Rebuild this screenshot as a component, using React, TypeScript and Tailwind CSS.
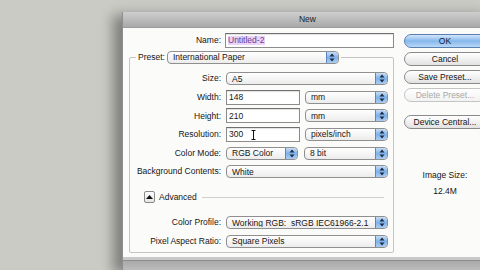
import React from 'react';

function Stepper() {
  return (
    <div className="flex h-full w-[12px] shrink-0 items-center justify-center rounded-r-[4px] border-l border-[#5d86bf] bg-gradient-to-b from-[#c6ddf7] via-[#7fb2ea] to-[#a9cdf3]">
      <svg width="6" height="9" viewBox="0 0 6 9">
        <path d="M3 0.5 L5.5 3.5 L0.5 3.5 Z" fill="#1d2b45" />
        <path d="M3 8.5 L5.5 5.5 L0.5 5.5 Z" fill="#1d2b45" />
      </svg>
    </div>
  );
}

function Select({ value, className = '' }: { value: string; className?: string }) {
  return (
    <div className={`flex h-[13px] items-center overflow-hidden rounded-[4px] border border-[#8f8f8f] bg-gradient-to-b from-white to-[#ececec] ${className}`}>
      <span className="flex-1 truncate whitespace-pre pl-[5px] leading-none">{value}</span>
      <Stepper />
    </div>
  );
}

function Field({ value, className = '', children }: { value: string; className?: string; children?: React.ReactNode }) {
  return (
    <div className={`flex h-[15px] items-center border border-[#8c8c8c] border-t-[#6f6f6f] bg-white pl-[2px] leading-none shadow-[inset_0_1px_1px_rgba(0,0,0,0.12)] ${className}`}>
      {value}
      {children}
    </div>
  );
}

function Row({ label, children }: { label: string; children: React.ReactNode }) {
  return (
    <div className="flex h-[18.6px] items-center">
      <div className="flex w-[91px] shrink-0 justify-end whitespace-nowrap">{label}</div>
      <div className="ml-[5px] flex flex-1 items-center gap-[5px]">{children}</div>
    </div>
  );
}

function Button({ label, kind = 'normal' }: { label: string; kind?: 'normal' | 'default' | 'disabled' }) {
  const styles = {
    normal: 'border-[#8a8a8a] bg-gradient-to-b from-white via-[#f1f1f1] to-[#e2e2e2] text-[#151515]',
    default: 'border-[#5a7fb3] bg-gradient-to-b from-[#d3e6fa] via-[#86b8ec] to-[#b9d8f6] text-[#10203a]',
    disabled: 'border-[#c4c4c4] bg-gradient-to-b from-white to-[#f2f2f2] text-[#a8a8a8]',
  };
  return (
    <div className={`flex h-[14px] w-[82px] items-center justify-center rounded-full border leading-none ${styles[kind]}`}>
      {label}
    </div>
  );
}

export default function App() {
  return (
    <div
      className="h-[270px] w-[480px] overflow-hidden bg-[#cbcbc6] pl-[122px] pt-[12px] text-[8.5px] text-[#151515]"
      style={{ fontFamily: '"Liberation Sans", Arial, sans-serif' }}
    >
      <div className="flex w-[370px] flex-col border-l border-[#8f8f8f] shadow-[-9px_3px_12px_rgba(0,0,0,0.38)]">
        <div className="flex h-[16px] items-center justify-center border-b border-[#9c9c9c] bg-gradient-to-b from-[#cfcfcf] to-[#a9a9a9] text-[#222]">
          New
        </div>
        <div className="flex h-[229px] bg-[#fbfbfa] pl-[6px] pt-[5px]">
          <div className="flex w-[265px] flex-col">
            <div className="flex h-[15px] items-center">
              <div className="flex w-[92px] shrink-0 justify-end">Name:</div>
              <Field value="" className="ml-[4px] flex-1">
                <span className="bg-[#e9d3f6] pr-[1px] text-[#6c3f92]">Untitled-2</span>
              </Field>
            </div>

            <fieldset className="mt-[3px] h-[202px] rounded-[2px] border border-[#c4c4c4] pb-[2px] pt-[5.5px]">
              <legend className="ml-[6px] flex items-center px-[2px]">
                <span>Preset:</span>
                <Select value="International Paper" className="ml-[2px] w-[172px]" />
              </legend>

              <Row label="Size:">
                <Select value="A5" className="flex-1" />
                <span className="w-[0px]" />
              </Row>
              <Row label="Width:">
                <Field value="148" className="w-[74px]" />
                <Select value="mm" className="flex-1" />
                <span className="w-[0px]" />
              </Row>
              <Row label="Height:">
                <Field value="210" className="w-[74px]" />
                <Select value="mm" className="flex-1" />
                <span className="w-[0px]" />
              </Row>
              <Row label="Resolution:">
                <Field value="300" className="w-[74px]">
                  <svg width="5" height="10" viewBox="0 0 5 10" className="ml-[8px]">
                    <path d="M0.5 0.5 H4.5 M2.5 0.5 V9.5 M0.5 9.5 H4.5" stroke="#111" strokeWidth="1" fill="none" />
                  </svg>
                </Field>
                <Select value="pixels/inch" className="flex-1" />
                <span className="w-[0px]" />
              </Row>
              <Row label="Color Mode:">
                <Select value="RGB Color" className="w-[72px]" />
                <Select value="8 bit" className="ml-[1px] flex-1" />
                <span className="w-[0px]" />
              </Row>
              <Row label="Background Contents:">
                <Select value="White" className="flex-1" />
                <span className="w-[0px]" />
              </Row>

              <div className="mt-[9px] flex h-[14px] items-center pl-[14px]">
                <div className="flex h-[12px] w-[11px] items-center justify-center rounded-[2px] border border-[#8a8a8a] bg-gradient-to-b from-white to-[#e4e4e4]">
                  <svg width="7" height="4" viewBox="0 0 7 4">
                    <path d="M3.5 0 L7 4 L0 4 Z" fill="#111" />
                  </svg>
                </div>
                <span className="ml-[4px]">Advanced</span>
                <div className="ml-[5px] mr-[9px] h-px flex-1 bg-[#cfcfcf]" />
              </div>

              <div className="mt-[9.5px]">
                <Row label="Color Profile:">
                  <Select value="Working RGB:  sRGB IEC61966-2.1" className="flex-1" />
                  <span className="w-[0px]" />
                </Row>
                <Row label="Pixel Aspect Ratio:">
                  <Select value="Square Pixels" className="flex-1" />
                  <span className="w-[0px]" />
                </Row>
              </div>
            </fieldset>
          </div>

          <div className="ml-[10px] flex flex-col">
            <div className="mt-[1px] flex flex-col gap-[4px]">
              <Button label="OK" kind="default" />
              <Button label="Cancel" />
              <Button label="Save Preset..." />
              <Button label="Delete Preset..." kind="disabled" />
            </div>
            <div className="mt-[13px]">
              <Button label="Device Central..." />
            </div>
            <div className="mt-[42px] flex w-[82px] flex-col items-center gap-[7px] leading-none">
              <span>Image Size:</span>
              <span>12.4M</span>
            </div>
          </div>
        </div>
        <div className="h-[3px] bg-[#c9c9c9]" />
        <div className="h-[10px] border-t border-[#8e8e8e] bg-gradient-to-b from-[#a9a9a9] to-[#bcbcbc]" />
      </div>
    </div>
  );
}
